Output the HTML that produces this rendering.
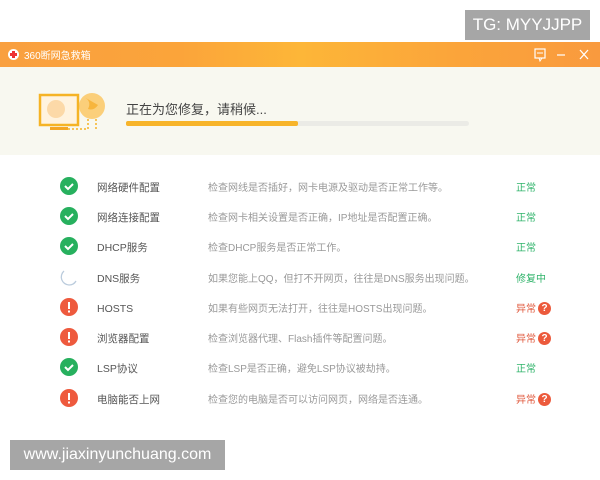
<!DOCTYPE html>
<html><head><meta charset="utf-8"><style>
*{margin:0;padding:0;box-sizing:border-box}
body{width:600px;height:480px;background:#fff;position:relative;overflow:hidden;font-family:"Liberation Sans","Noto Sans CJK SC",sans-serif}
.wm{position:absolute;background:#a6a6a6;color:#fff;font-size:17px;display:flex;align-items:center;justify-content:center}
.title{position:absolute;left:0;top:42px;width:600px;height:25px;background:linear-gradient(90deg,#f9a040 0%,#fba43a 30%,#fdb638 50%,#fba53a 75%,#f99a3e 100%);color:#fff;font-size:10px}
.head{position:absolute;left:0;top:67px;width:600px;height:88px;background:#f8f8f0}
.row{position:absolute;left:0;width:600px;height:20px;font-size:10px;line-height:14px}
.row .ic{position:absolute;left:60px;top:1px;width:18px;height:18px}
.row .n{position:absolute;left:97px;top:5px;color:#555;font-size:10.5px;line-height:14px}
.row .d{position:absolute;left:208px;top:6px;color:#999;line-height:14px}
.row .s{position:absolute;left:516px;top:6px;line-height:14px}
.g{color:#2fb36a}.r{color:#e0583c}
.q{position:absolute;left:538px;top:5px;width:13px;height:13px;border-radius:50%;background:#ec5a3c;color:#fff;font-size:10px;font-weight:bold;text-align:center;line-height:13px;display:block}
</style></head><body>
<div class="wm" style="left:465px;top:10px;width:125px;height:30px">TG: MYYJJPP</div>
<div class="title">
<div style="position:absolute;left:8px;top:7px;width:11px;height:11px;border-radius:50%;background:#fff"></div>
<div style="position:absolute;left:12px;top:9px;width:3px;height:7px;background:#e33"></div>
<div style="position:absolute;left:10px;top:11px;width:7px;height:3px;background:#e33"></div>
<div style="position:absolute;left:24px;top:8px;line-height:14px">360断网急救箱</div>
<svg style="position:absolute;left:534px;top:6px" width="60" height="14"><rect x="1" y="1" width="10" height="9" fill="none" stroke="#fff" stroke-width="1.2"/><path d="M3 5h6M5 10l1 3 2-3" stroke="#fff" fill="none"/><path d="M23 7h8" stroke="#fff" stroke-width="1.2"/><path d="M46 2l8 9M54 2l-8 9" stroke="#fff" stroke-width="1.3"/></svg>
</div>
<div class="head">
<svg style="position:absolute;left:36px;top:22px" width="72" height="48">
<circle cx="56" cy="17" r="13" fill="#fbcf7a"/><path d="M48 8q8 4 4 12q6 2 10-4" fill="#f7b53d"/>
<rect x="4" y="6" width="38" height="30" fill="#fff3df" stroke="#f5b325" stroke-width="2.5"/>
<circle cx="20" cy="20" r="9" fill="#fcd9a8"/>
<rect x="14" y="38" width="18" height="3" fill="#f5a623"/>
<path d="M32 40h20v-10M60 30v10" stroke="#f5b325" stroke-dasharray="2 2" fill="none" stroke-width="1.5"/>
</svg>
<div style="position:absolute;left:126px;top:32px;font-size:13px;color:#444">正在为您修复，请稍候...</div>
<div style="position:absolute;left:126px;top:54px;width:343px;height:5px;background:#ebebe6;border-radius:3px"></div>
<div style="position:absolute;left:126px;top:54px;width:172px;height:5px;background:#f7b42a;border-radius:2px"></div>
</div>

<div class="row" style="top:176px"><svg class="ic"><circle cx="9" cy="9" r="9" fill="#27b05e"/><path d="M5 9l3 3 5-5" stroke="#fff" stroke-width="2" fill="none"/></svg><span class="n">网络硬件配置</span><span class="d">检查网线是否插好，网卡电源及驱动是否正常工作等。</span><span class="s g">正常</span></div>
<div class="row" style="top:206px"><svg class="ic"><circle cx="9" cy="9" r="9" fill="#27b05e"/><path d="M5 9l3 3 5-5" stroke="#fff" stroke-width="2" fill="none"/></svg><span class="n">网络连接配置</span><span class="d">检查网卡相关设置是否正确，IP地址是否配置正确。</span><span class="s g">正常</span></div>
<div class="row" style="top:236px"><svg class="ic"><circle cx="9" cy="9" r="9" fill="#27b05e"/><path d="M5 9l3 3 5-5" stroke="#fff" stroke-width="2" fill="none"/></svg><span class="n">DHCP服务</span><span class="d">检查DHCP服务是否正常工作。</span><span class="s g">正常</span></div>
<div class="row" style="top:267px"><svg class="ic"><path d="M4 3A8 8 0 0 0 9 17a8 8 0 0 0 7-4" stroke="#bcd" stroke-width="1.3" fill="none"/></svg><span class="n">DNS服务</span><span class="d">如果您能上QQ，但打不开网页，往往是DNS服务出现问题。</span><span class="s g">修复中</span></div>
<div class="row" style="top:297px"><svg class="ic"><circle cx="9" cy="9" r="9" fill="#ee5a3e"/><rect x="8" y="4" width="2" height="7" fill="#fff"/><rect x="8" y="12.5" width="2" height="2" fill="#fff"/></svg><span class="n">HOSTS</span><span class="d">如果有些网页无法打开，往往是HOSTS出现问题。</span><span class="s r">异常</span><span class="q">?</span></div>
<div class="row" style="top:327px"><svg class="ic"><circle cx="9" cy="9" r="9" fill="#ee5a3e"/><rect x="8" y="4" width="2" height="7" fill="#fff"/><rect x="8" y="12.5" width="2" height="2" fill="#fff"/></svg><span class="n">浏览器配置</span><span class="d">检查浏览器代理、Flash插件等配置问题。</span><span class="s r">异常</span><span class="q">?</span></div>
<div class="row" style="top:357px"><svg class="ic"><circle cx="9" cy="9" r="9" fill="#27b05e"/><path d="M5 9l3 3 5-5" stroke="#fff" stroke-width="2" fill="none"/></svg><span class="n">LSP协议</span><span class="d">检查LSP是否正确，避免LSP协议被劫持。</span><span class="s g">正常</span></div>
<div class="row" style="top:388px"><svg class="ic"><circle cx="9" cy="9" r="9" fill="#ee5a3e"/><rect x="8" y="4" width="2" height="7" fill="#fff"/><rect x="8" y="12.5" width="2" height="2" fill="#fff"/></svg><span class="n">电脑能否上网</span><span class="d">检查您的电脑是否可以访问网页，网络是否连通。</span><span class="s r">异常</span><span class="q">?</span></div>

<div class="wm" style="left:10px;top:440px;width:215px;height:30px;font-size:16px">www.jiaxinyunchuang.com</div>
</body></html>
